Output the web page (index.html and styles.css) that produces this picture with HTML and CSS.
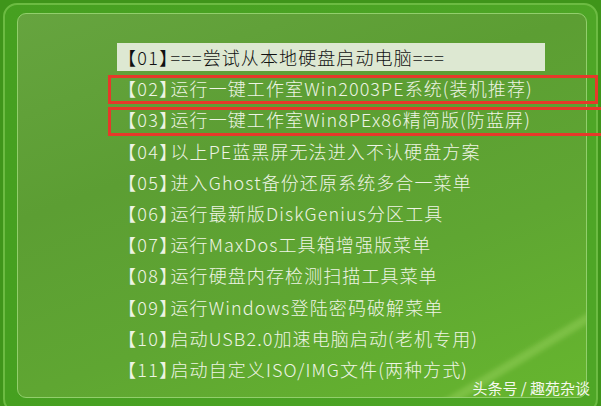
FILE: index.html
```html
<!DOCTYPE html>
<html>
<head>
<meta charset="utf-8">
<link rel="stylesheet" href="styles.css">
</head>
<body>
<div class="screen">
  <div class="frame">
    <div class="panel">
      <div class="stripe"></div>
      <ul class="menu">
        <li class="item active"><span class="tag">【01】</span>===尝试从本地硬盘启动电脑===</li>
        <li class="item"><span class="tag">【02】</span>运行一键工作室Win2003PE系统(装机推荐)</li>
        <li class="item"><span class="tag">【03】</span>运行一键工作室Win8PEx86精简版(防蓝屏)</li>
        <li class="item"><span class="tag">【04】</span>以上PE蓝黑屏无法进入不认硬盘方案</li>
        <li class="item"><span class="tag">【05】</span>进入Ghost备份还原系统多合一菜单</li>
        <li class="item"><span class="tag">【06】</span>运行最新版DiskGenius分区工具</li>
        <li class="item"><span class="tag">【07】</span>运行MaxDos工具箱增强版菜单</li>
        <li class="item"><span class="tag">【08】</span>运行硬盘内存检测扫描工具菜单</li>
        <li class="item"><span class="tag">【09】</span>运行Windows登陆密码破解菜单</li>
        <li class="item"><span class="tag">【10】</span>启动USB2.0加速电脑启动(老机专用)</li>
        <li class="item"><span class="tag">【11】</span>启动自定义ISO/IMG文件(两种方式)</li>
      </ul>
    </div>
  </div>
  <div class="mark mark-02"></div>
  <div class="mark mark-03"></div>
  <div class="watermark">头条号 / 趣苑杂谈</div>
</div>
</body>
</html>
```
FILE: styles.css
```css
html, body {
  margin: 0;
  padding: 0;
}
body {
  width: 601px;
  height: 406px;
  overflow: hidden;
  font-family: "Noto Sans CJK SC", "Noto Sans", sans-serif;
}
.screen {
  position: relative;
  width: 601px;
  height: 406px;
  box-sizing: border-box;
  padding: 3px 3px 0 3px;
  background: #3f951a;
  overflow: hidden;
}
.frame {
  box-sizing: border-box;
  height: 410px;
  border: 2px solid #6cbb42;
  border-radius: 14px;
  background: linear-gradient(90deg, #46a020 0%, #4ea626 100%);
  padding: 8px 9px 0 12px;
}
.panel {
  position: relative;
  box-sizing: border-box;
  height: 385px;
  border: 1px solid #92cf6c;
  border-radius: 9px;
  background: linear-gradient(160deg, #66a43f 0%, #5c9e33 35%, #5fa632 65%, #66b62e 100%);
  padding: 29px 0 0 99px;
  overflow: hidden;
}
.stripe {
  position: absolute;
  left: 405px;
  top: 398px;
  width: 260px;
  height: 9px;
  background: rgba(160, 215, 100, 0.4);
  transform: rotate(-31deg);
  transform-origin: left top;
  filter: blur(2px);
}
.menu {
  position: relative;
  list-style: none;
  margin: 0;
  padding: 0;
  display: flex;
  flex-direction: column;
  gap: 3.2px;
}
.item {
  height: 28px;
  line-height: 28px;
  padding-left: 10px;
  font-size: 18px;
  font-weight: 300;
  letter-spacing: 1.1px;
  color: #eef4e4;
  white-space: nowrap;
}
.tag {
  font-feature-settings: "halt" 1;
  letter-spacing: 1.3px;
  margin-right: 1px;
}
.item.active {
  width: 418px;
  background: #dde8d2;
  color: #111;
}
.mark {
  position: absolute;
  border: 3px solid #e6392a;
  box-sizing: border-box;
}
.mark-02 {
  left: 108px;
  top: 75px;
  width: 490px;
  height: 29px;
}
.mark-03 {
  left: 108px;
  top: 107px;
  width: 510px;
  height: 29px;
}
.watermark {
  position: absolute;
  right: 11px;
  bottom: 8px;
  font-size: 15px;
  color: #f4f8ee;
  letter-spacing: 0;
}
```
